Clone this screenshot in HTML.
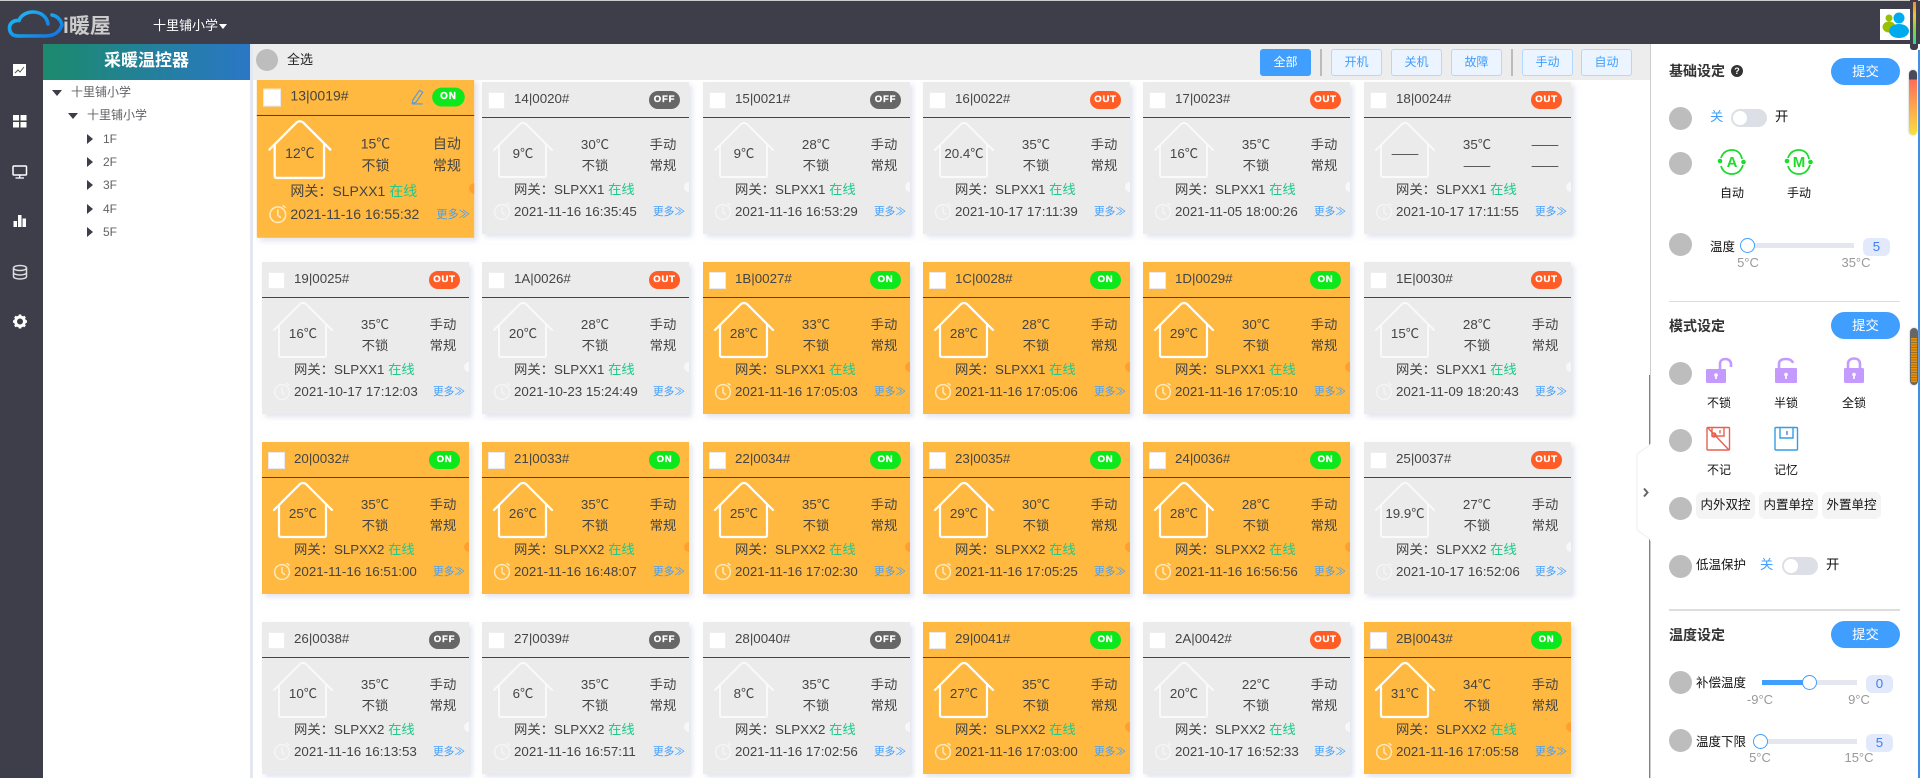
<!DOCTYPE html>
<html lang="zh"><head><meta charset="utf-8"><title>i暖屋</title>
<style>
*{box-sizing:border-box;margin:0;padding:0}
html,body{width:1920px;height:778px;overflow:hidden;background:#fff}
body{position:relative;font:13.33px/18px "Liberation Sans","Noto Sans CJK SC",sans-serif;color:#333;filter:blur(.3px)}
.a,.a>*{position:absolute}
#top{left:0;top:0;width:1920px;height:44px;background:#3e3d4a;border-top:1px solid #ccc}
#side{left:0;top:44px;width:43px;height:734px;background:#3e3d4a}
#tree{left:43px;top:44px;width:207px;height:734px;background:#fff}
#th{position:absolute;left:43px;top:44px;width:207px;height:36px;background:linear-gradient(90deg,#1c8a6c,#2a77c6);color:#fff;font-weight:bold;font-size:17px;line-height:34px;text-align:center}
.tt{position:absolute;color:#606266;white-space:nowrap;font-size:12px}
#strip{position:absolute;left:250px;top:44px;width:3px;height:734px;background:#e4e7f0}
#bar{position:absolute;left:253px;top:44px;width:1397px;height:36px;background:#ededed;z-index:2}
.bt{position:absolute;top:49px;height:27px;width:51px;border:1px solid #b3d8ff;background:#ecf5ff;color:#409eff;font-size:12px;line-height:25px;text-align:center;border-radius:3px;z-index:3}
.sp{position:absolute;top:49px;height:27px;width:2px;background:#bbb;z-index:3}
.c{position:absolute;width:207px;height:152px;background:#ebebeb;box-shadow:3px 3px 5px rgba(200,205,225,.55);color:#444;--hs:#fafafa;--sw:1.9;--ck:#f5f5f5}
.c.o{background:#ffb940;--hs:#fff;--sw:2.2;--ck:#ffe9bd}
.c>*{position:absolute;white-space:nowrap}
.c svg{left:0;top:0;width:207px;height:152px}
.k{left:6px;top:10px;width:17px;height:17px;background:#fff;border:1px solid #eee}
.o .k{border-color:#e8e8ee}
.t{left:32px;top:8px}
.l{left:0;top:35px;width:207px;height:1px;background:#3a4a4a}
.b{left:167px;top:9px;width:31px;height:18px;border-radius:9px;color:#fff;font:bold 9.5px/18px "Liberation Sans",sans-serif;letter-spacing:.8px;text-align:center;-webkit-text-stroke:.3px #fff}
.on{background:#0de81c}.off{background:#666}.out{background:#ff5c26}
.m{left:1px;width:80px;text-align:center;top:63px}
.s{left:83px;width:60px;text-align:center;top:54px}.s2{top:75px}
.w{left:161px;width:40px;text-align:center;top:54px}.w2{top:75px}
.g{left:32px;top:99px}.g i{font-style:normal;color:#1fc98a}
.d{left:32px;top:121px}
.mo{left:171px;top:121px;font-size:10.67px;color:#409eff}
.dt{left:202px;top:100px;width:5px;height:10px;border-radius:5px 0 0 5px;background:#f7f7f7}
.o .dt{background:#ff9f2e}
.hs{fill:none;stroke:var(--hs);stroke-width:var(--sw);stroke-linecap:round;stroke-linejoin:round}
.ck{fill:none;stroke:var(--ck);stroke-width:1.500;stroke-linecap:round}
#panel{position:absolute;left:1650px;top:44px;width:270px;height:734px;background:#fff;border-left:1px solid #ccc}
.p{position:absolute;white-space:nowrap;color:#111}
.f{font-size:12.5px}
.h3{font-size:14px;font-weight:bold;color:#333}
.cir{position:absolute;left:1669px;width:23px;height:23px;border-radius:50%;background:#bdbdbd}
.sub{position:absolute;left:1831px;width:69px;height:27px;border-radius:14px;background:#409eff;color:#fff;text-align:center;line-height:27px}
.tg{position:absolute;width:36px;height:18px;border-radius:9px;background:#dcdfe6}
.tg b{position:absolute;left:2px;top:2px;width:14px;height:14px;border-radius:50%;background:#fff}
.ctr{position:absolute;text-align:center;white-space:nowrap;color:#111;width:60px;font-size:12px}
.tr{position:absolute;height:5px;background:#e4e7ed}
.kn{position:absolute;width:15px;height:15px;border-radius:50%;background:#fff;border:1.5px solid #409eff}
.vb{position:absolute;width:27px;height:18px;border-radius:6px;background:#e1e9fb;color:#3f7ff0;text-align:center;line-height:18px}
.lb{position:absolute;width:50px;text-align:center;color:#999;font-size:13px;white-space:nowrap}
.mb{position:absolute;top:492px;width:59px;height:27px;border-radius:6px;background:#f4f4f5;color:#111;text-align:center;line-height:26px;white-space:nowrap;font-size:12.5px}
svg.ab{position:absolute;overflow:visible}
</style></head><body>
<svg width="0" height="0" style="position:absolute"><defs>
<symbol id="hs" viewBox="0 0 207 152"><path class="hs" d="M12 68L38 42Q41 40 44 42L70 68M17 63V93Q17 95 19 95H62Q64 95 64 93V63"/><circle class="ck" cx="20" cy="130" r="7.4"/><path class="ck" d="M20 125.500V130.500L22.500 132.500M25 121.500L27 123"/></symbol>
<linearGradient id="cl" x1="0" y1="0" x2="1" y2="1"><stop offset="0" stop-color="#1fc3f5"/><stop offset="1" stop-color="#1170e0"/></linearGradient>
</defs></svg>

<div id="top" class="a"></div>
<svg class="ab" style="left:0;top:0" width="70" height="44" viewBox="0 0 70 44"><path d="M18 36C11 36 9.500 31 9.500 28C9.500 23 14 20 19 20.500C21 15 27 12 33 12C41 12 47 17 48 24" fill="none" stroke="url(#cl)" stroke-width="3.600" stroke-linecap="round"/><path d="M18 36H46C55 36 60 31 62 25C61 20 57 16 52 15" fill="none" stroke="url(#cl)" stroke-width="3.600" stroke-linecap="round"/></svg>
<div class="p" style="left:63px;top:12px;font-size:21px;line-height:30px;color:#ccc;font-weight:bold">i暖屋</div>
<div class="p" style="left:153px;top:17px;color:#fff;font-size:13px">十里铺小学</div>
<div style="position:absolute;left:219px;top:24px;border:4.500px solid transparent;border-top:5px solid #fff;border-bottom:0"></div>
<div style="position:absolute;left:1880px;top:9px;width:30px;height:31px;background:#fff"></div>
<svg class="ab" style="left:1880px;top:9px" width="30" height="31" viewBox="0 0 30 31"><circle cx="9" cy="9" r="3.500" fill="#99c000"/><ellipse cx="9" cy="18" rx="6.500" ry="5.500" fill="#99c000"/><circle cx="19" cy="9" r="5.500" fill="#00aaee"/><ellipse cx="19" cy="22" rx="10" ry="7" fill="#00aaee"/></svg>
<div style="position:absolute;left:1910px;top:0;width:8px;height:50px;background:#3e3d4a;border-radius:0 0 3px 3px;z-index:5"></div>
<div style="position:absolute;left:1913px;top:2px;width:3px;height:42px;z-index:6;background:linear-gradient(#f28a3a,#e8c43a,#7ed04a,#2fd8a0)"></div>

<div id="side" class="a"></div>
<svg class="ab" style="left:0;top:0" width="43" height="340" viewBox="0 0 43 340">
<rect x="13" y="64" width="13" height="12" fill="#fff"/><path d="M15 73L18 70L20 72L24 67" fill="none" stroke="#555" stroke-width="1"/>
<path d="M13 115h6v5.500h-6zM20.500 115h6v5.500h-6zM13 122h6v5.500h-6zM20.500 122h6v5.500h-6z" fill="#fff"/>
<rect x="13" y="166" width="13.500" height="9" rx="1" fill="none" stroke="#fff" stroke-width="1.500"/><path d="M19.700 175.500v2.500M15.500 178h8.500" stroke="#fff" stroke-width="1.300" fill="none"/>
<path d="M13.500 221h3.500v6h-3.500zM18 215h3.500v12H18zM22.500 218.500H26V227h-3.500z" fill="#fff"/>
<g fill="none" stroke="#ddd" stroke-width="1.500"><ellipse cx="20" cy="268" rx="6.500" ry="2.500"/><path d="M13.500 268v8.500c0 1.500 3 2.500 6.500 2.500s6.500-1 6.500-2.500V268M13.500 272.500c0 1.500 3 2.500 6.500 2.500s6.500-1 6.500-2.500"/></g>
<circle cx="20" cy="321.500" r="4.500" fill="none" stroke="#fff" stroke-width="3"/><g stroke="#fff" stroke-width="2.600"><path d="M20 314.500v2.500M20 326v2.500M13 321.500h2.500M24.500 321.500H27M15 316.500l2 2M23 324.500l2 2M25 316.500l-2 2M17 324.500l-2 2"/></g>
</svg>

<div id="tree" class="a"></div>
<div id="th">采暖温控器</div>
<div style="position:absolute;left:52px;top:90px;border:5px solid transparent;border-top:6px solid #3e3d4a;border-bottom:0"></div><div class="tt" style="left:71px;top:83px">十里铺小学</div>
<div style="position:absolute;left:68px;top:113px;border:5px solid transparent;border-top:6px solid #3e3d4a;border-bottom:0"></div><div class="tt" style="left:87px;top:106px">十里铺小学</div>
<div style="position:absolute;left:87px;top:134px;border:5px solid transparent;border-left:6px solid #3e3d4a;border-right:0"></div><div class="tt" style="left:103px;top:130px">1F</div>
<div style="position:absolute;left:87px;top:157px;border:5px solid transparent;border-left:6px solid #3e3d4a;border-right:0"></div><div class="tt" style="left:103px;top:153px">2F</div>
<div style="position:absolute;left:87px;top:180px;border:5px solid transparent;border-left:6px solid #3e3d4a;border-right:0"></div><div class="tt" style="left:103px;top:176px">3F</div>
<div style="position:absolute;left:87px;top:204px;border:5px solid transparent;border-left:6px solid #3e3d4a;border-right:0"></div><div class="tt" style="left:103px;top:200px">4F</div>
<div style="position:absolute;left:87px;top:227px;border:5px solid transparent;border-left:6px solid #3e3d4a;border-right:0"></div><div class="tt" style="left:103px;top:223px">5F</div>
<div id="strip"></div>

<div id="bar"></div>
<div style="position:absolute;left:256px;top:49px;width:22px;height:22px;border-radius:50%;background:#bdbdbd;z-index:3"></div>
<div class="p" style="left:287px;top:51px;z-index:3;color:#222;font-size:13px">全选</div>
<div class="bt" style="left:1260px;background:#409eff;border-color:#409eff;color:#fff">全部</div>
<div class="sp" style="left:1320px"></div>
<div class="bt" style="left:1331px">开机</div>
<div class="bt" style="left:1391px">关机</div>
<div class="bt" style="left:1451px">故障</div>
<div class="sp" style="left:1511px"></div>
<div class="bt" style="left:1522px">手动</div>
<div class="bt" style="left:1581px">自动</div>

<!-- row 1 -->
<div class="c o" style="left:262px;top:82px;transform:scale(1.05);z-index:1"><svg><use href="#hs"/></svg><div class="k"></div><div class="t">13|0019#</div><svg viewBox="0 0 207 152"><path d="M148.500 21L155 11.500L158 13.500L151.500 23L148 24ZM148 24.500H158" fill="none" stroke="#5b9bd5" stroke-width="1.100"/></svg><div class="b on">ON</div><div class="l"></div><div class="m">12℃</div><div class="s">15℃</div><div class="s s2">不锁</div><div class="w">自动</div><div class="w w2">常规</div><div class="g">网关：SLPXX1 <i>在线</i></div><div class="dt"></div><div class="d">2021-11-16 16:55:32</div><div class="mo">更多≫</div></div>
<div class="c" style="left:482px;top:82px"><svg><use href="#hs"/></svg><div class="k"></div><div class="t">14|0020#</div><div class="b off">OFF</div><div class="l"></div><div class="m">9℃</div><div class="s">30℃</div><div class="s s2">不锁</div><div class="w">手动</div><div class="w w2">常规</div><div class="g">网关：SLPXX1 <i>在线</i></div><div class="dt"></div><div class="d">2021-11-16 16:35:45</div><div class="mo">更多≫</div></div>
<div class="c" style="left:703px;top:82px"><svg><use href="#hs"/></svg><div class="k"></div><div class="t">15|0021#</div><div class="b off">OFF</div><div class="l"></div><div class="m">9℃</div><div class="s">28℃</div><div class="s s2">不锁</div><div class="w">手动</div><div class="w w2">常规</div><div class="g">网关：SLPXX1 <i>在线</i></div><div class="dt"></div><div class="d">2021-11-16 16:53:29</div><div class="mo">更多≫</div></div>
<div class="c" style="left:923px;top:82px"><svg><use href="#hs"/></svg><div class="k"></div><div class="t">16|0022#</div><div class="b out">OUT</div><div class="l"></div><div class="m">20.4℃</div><div class="s">35℃</div><div class="s s2">不锁</div><div class="w">手动</div><div class="w w2">常规</div><div class="g">网关：SLPXX1 <i>在线</i></div><div class="dt"></div><div class="d">2021-10-17 17:11:39</div><div class="mo">更多≫</div></div>
<div class="c" style="left:1143px;top:82px"><svg><use href="#hs"/></svg><div class="k"></div><div class="t">17|0023#</div><div class="b out">OUT</div><div class="l"></div><div class="m">16℃</div><div class="s">35℃</div><div class="s s2">不锁</div><div class="w">手动</div><div class="w w2">常规</div><div class="g">网关：SLPXX1 <i>在线</i></div><div class="dt"></div><div class="d">2021-11-05 18:00:26</div><div class="mo">更多≫</div></div>
<div class="c" style="left:1364px;top:82px"><svg><use href="#hs"/></svg><div class="k"></div><div class="t">18|0024#</div><div class="b out">OUT</div><div class="l"></div><div class="m">——</div><div class="s">35℃</div><div class="s s2">——</div><div class="w">——</div><div class="w w2">——</div><div class="g">网关：SLPXX1 <i>在线</i></div><div class="dt"></div><div class="d">2021-10-17 17:11:55</div><div class="mo">更多≫</div></div>
<!-- row 2 -->
<div class="c" style="left:262px;top:262px"><svg><use href="#hs"/></svg><div class="k"></div><div class="t">19|0025#</div><div class="b out">OUT</div><div class="l"></div><div class="m">16℃</div><div class="s">35℃</div><div class="s s2">不锁</div><div class="w">手动</div><div class="w w2">常规</div><div class="g">网关：SLPXX1 <i>在线</i></div><div class="dt"></div><div class="d">2021-10-17 17:12:03</div><div class="mo">更多≫</div></div>
<div class="c" style="left:482px;top:262px"><svg><use href="#hs"/></svg><div class="k"></div><div class="t">1A|0026#</div><div class="b out">OUT</div><div class="l"></div><div class="m">20℃</div><div class="s">28℃</div><div class="s s2">不锁</div><div class="w">手动</div><div class="w w2">常规</div><div class="g">网关：SLPXX1 <i>在线</i></div><div class="dt"></div><div class="d">2021-10-23 15:24:49</div><div class="mo">更多≫</div></div>
<div class="c o" style="left:703px;top:262px"><svg><use href="#hs"/></svg><div class="k"></div><div class="t">1B|0027#</div><div class="b on">ON</div><div class="l"></div><div class="m">28℃</div><div class="s">33℃</div><div class="s s2">不锁</div><div class="w">手动</div><div class="w w2">常规</div><div class="g">网关：SLPXX1 <i>在线</i></div><div class="dt"></div><div class="d">2021-11-16 17:05:03</div><div class="mo">更多≫</div></div>
<div class="c o" style="left:923px;top:262px"><svg><use href="#hs"/></svg><div class="k"></div><div class="t">1C|0028#</div><div class="b on">ON</div><div class="l"></div><div class="m">28℃</div><div class="s">28℃</div><div class="s s2">不锁</div><div class="w">手动</div><div class="w w2">常规</div><div class="g">网关：SLPXX1 <i>在线</i></div><div class="dt"></div><div class="d">2021-11-16 17:05:06</div><div class="mo">更多≫</div></div>
<div class="c o" style="left:1143px;top:262px"><svg><use href="#hs"/></svg><div class="k"></div><div class="t">1D|0029#</div><div class="b on">ON</div><div class="l"></div><div class="m">29℃</div><div class="s">30℃</div><div class="s s2">不锁</div><div class="w">手动</div><div class="w w2">常规</div><div class="g">网关：SLPXX1 <i>在线</i></div><div class="dt"></div><div class="d">2021-11-16 17:05:10</div><div class="mo">更多≫</div></div>
<div class="c" style="left:1364px;top:262px"><svg><use href="#hs"/></svg><div class="k"></div><div class="t">1E|0030#</div><div class="b out">OUT</div><div class="l"></div><div class="m">15℃</div><div class="s">28℃</div><div class="s s2">不锁</div><div class="w">手动</div><div class="w w2">常规</div><div class="g">网关：SLPXX1 <i>在线</i></div><div class="dt"></div><div class="d">2021-11-09 18:20:43</div><div class="mo">更多≫</div></div>
<!-- row 3 -->
<div class="c o" style="left:262px;top:442px"><svg><use href="#hs"/></svg><div class="k"></div><div class="t">20|0032#</div><div class="b on">ON</div><div class="l"></div><div class="m">25℃</div><div class="s">35℃</div><div class="s s2">不锁</div><div class="w">手动</div><div class="w w2">常规</div><div class="g">网关：SLPXX2 <i>在线</i></div><div class="dt"></div><div class="d">2021-11-16 16:51:00</div><div class="mo">更多≫</div></div>
<div class="c o" style="left:482px;top:442px"><svg><use href="#hs"/></svg><div class="k"></div><div class="t">21|0033#</div><div class="b on">ON</div><div class="l"></div><div class="m">26℃</div><div class="s">35℃</div><div class="s s2">不锁</div><div class="w">手动</div><div class="w w2">常规</div><div class="g">网关：SLPXX2 <i>在线</i></div><div class="dt"></div><div class="d">2021-11-16 16:48:07</div><div class="mo">更多≫</div></div>
<div class="c o" style="left:703px;top:442px"><svg><use href="#hs"/></svg><div class="k"></div><div class="t">22|0034#</div><div class="b on">ON</div><div class="l"></div><div class="m">25℃</div><div class="s">35℃</div><div class="s s2">不锁</div><div class="w">手动</div><div class="w w2">常规</div><div class="g">网关：SLPXX2 <i>在线</i></div><div class="dt"></div><div class="d">2021-11-16 17:02:30</div><div class="mo">更多≫</div></div>
<div class="c o" style="left:923px;top:442px"><svg><use href="#hs"/></svg><div class="k"></div><div class="t">23|0035#</div><div class="b on">ON</div><div class="l"></div><div class="m">29℃</div><div class="s">30℃</div><div class="s s2">不锁</div><div class="w">手动</div><div class="w w2">常规</div><div class="g">网关：SLPXX2 <i>在线</i></div><div class="dt"></div><div class="d">2021-11-16 17:05:25</div><div class="mo">更多≫</div></div>
<div class="c o" style="left:1143px;top:442px"><svg><use href="#hs"/></svg><div class="k"></div><div class="t">24|0036#</div><div class="b on">ON</div><div class="l"></div><div class="m">28℃</div><div class="s">28℃</div><div class="s s2">不锁</div><div class="w">手动</div><div class="w w2">常规</div><div class="g">网关：SLPXX2 <i>在线</i></div><div class="dt"></div><div class="d">2021-11-16 16:56:56</div><div class="mo">更多≫</div></div>
<div class="c" style="left:1364px;top:442px"><svg><use href="#hs"/></svg><div class="k"></div><div class="t">25|0037#</div><div class="b out">OUT</div><div class="l"></div><div class="m">19.9℃</div><div class="s">27℃</div><div class="s s2">不锁</div><div class="w">手动</div><div class="w w2">常规</div><div class="g">网关：SLPXX2 <i>在线</i></div><div class="dt"></div><div class="d">2021-10-17 16:52:06</div><div class="mo">更多≫</div></div>
<!-- row 4 -->
<div class="c" style="left:262px;top:622px"><svg><use href="#hs"/></svg><div class="k"></div><div class="t">26|0038#</div><div class="b off">OFF</div><div class="l"></div><div class="m">10℃</div><div class="s">35℃</div><div class="s s2">不锁</div><div class="w">手动</div><div class="w w2">常规</div><div class="g">网关：SLPXX2 <i>在线</i></div><div class="dt"></div><div class="d">2021-11-16 16:13:53</div><div class="mo">更多≫</div></div>
<div class="c" style="left:482px;top:622px"><svg><use href="#hs"/></svg><div class="k"></div><div class="t">27|0039#</div><div class="b off">OFF</div><div class="l"></div><div class="m">6℃</div><div class="s">35℃</div><div class="s s2">不锁</div><div class="w">手动</div><div class="w w2">常规</div><div class="g">网关：SLPXX2 <i>在线</i></div><div class="dt"></div><div class="d">2021-11-16 16:57:11</div><div class="mo">更多≫</div></div>
<div class="c" style="left:703px;top:622px"><svg><use href="#hs"/></svg><div class="k"></div><div class="t">28|0040#</div><div class="b off">OFF</div><div class="l"></div><div class="m">8℃</div><div class="s">35℃</div><div class="s s2">不锁</div><div class="w">手动</div><div class="w w2">常规</div><div class="g">网关：SLPXX2 <i>在线</i></div><div class="dt"></div><div class="d">2021-11-16 17:02:56</div><div class="mo">更多≫</div></div>
<div class="c o" style="left:923px;top:622px"><svg><use href="#hs"/></svg><div class="k"></div><div class="t">29|0041#</div><div class="b on">ON</div><div class="l"></div><div class="m">27℃</div><div class="s">35℃</div><div class="s s2">不锁</div><div class="w">手动</div><div class="w w2">常规</div><div class="g">网关：SLPXX2 <i>在线</i></div><div class="dt"></div><div class="d">2021-11-16 17:03:00</div><div class="mo">更多≫</div></div>
<div class="c" style="left:1143px;top:622px"><svg><use href="#hs"/></svg><div class="k"></div><div class="t">2A|0042#</div><div class="b out">OUT</div><div class="l"></div><div class="m">20℃</div><div class="s">22℃</div><div class="s s2">不锁</div><div class="w">手动</div><div class="w w2">常规</div><div class="g">网关：SLPXX2 <i>在线</i></div><div class="dt"></div><div class="d">2021-10-17 16:52:33</div><div class="mo">更多≫</div></div>
<div class="c o" style="left:1364px;top:622px"><svg><use href="#hs"/></svg><div class="k"></div><div class="t">2B|0043#</div><div class="b on">ON</div><div class="l"></div><div class="m">31℃</div><div class="s">34℃</div><div class="s s2">不锁</div><div class="w">手动</div><div class="w w2">常规</div><div class="g">网关：SLPXX2 <i>在线</i></div><div class="dt"></div><div class="d">2021-11-16 17:05:58</div><div class="mo">更多≫</div></div>

<!-- right panel -->
<div id="panel"></div>
<div style="position:absolute;left:1649px;top:375px;width:1px;height:403px;background:#4a8ad8"></div>
<div style="position:absolute;left:1918px;top:50px;width:2px;height:728px;background:#3f8fe8"></div>
<svg class="ab" style="left:1636px;top:444px" width="15" height="97" viewBox="0 0 15 97"><path d="M15 0L1 10V86L15 96Z" fill="#fff" stroke="#eee" stroke-width="1"/><path d="M15 0V97" stroke="#fff" stroke-width="2"/><path d="M8 44.500L11.500 48.500L8 52.500" fill="none" stroke="#666" stroke-width="2"/></svg>
<div style="position:absolute;left:1909px;top:70px;width:8px;height:65px;border-radius:4px;background:linear-gradient(#4a4a5a 0,#4a4a5a 9px,#ff6f5a 10px,#f5e040 100%);box-shadow:0 0 2px #bbb"></div>
<div style="position:absolute;left:1910px;top:328px;width:8px;height:57px;border-radius:4px;background:repeating-linear-gradient(#f09000 0,#f09000 1.500px,#9a7020 1.500px,#9a7020 2.500px);border:solid #666;border-width:10px 1px 2px;box-shadow:0 0 2px #bbb"></div>

<div class="p h3" style="left:1669px;top:62px">基础设定</div>
<div style="position:absolute;left:1731px;top:65px;width:12px;height:12px;border-radius:50%;background:#333;color:#fff;font:bold 9px/12px 'Liberation Sans';text-align:center">?</div>
<div class="sub" style="top:58px">提交</div>
<div class="cir" style="top:107px"></div>
<div class="p" style="left:1710px;top:108px;color:#409eff">关</div>
<div class="tg" style="left:1731px;top:109px"><b></b></div>
<div class="p" style="left:1775px;top:108px">开</div>
<div class="cir" style="top:152px"></div>
<svg class="ab" style="left:1715px;top:146px" width="100" height="32" viewBox="0 0 100 32" font-family="Liberation Sans" font-weight="bold" font-size="15" fill="#1ddb2a" text-anchor="middle">
<g fill="none" stroke="#1ddb2a" stroke-width="1.800"><path d="M6 12C8 6 12 4 17 4C22 4 26 7 27 13M28 19C26 25 22 28 17 28C12 28 8 26 6 20"/><path d="M73 12C75 6 79 4 84 4C89 4 93 7 94 13M95 19C93 25 89 28 84 28C79 28 75 26 73 20"/></g>
<circle cx="5" cy="15" r="2.300"/><circle cx="28.500" cy="16" r="2.300"/><circle cx="72" cy="15" r="2.300"/><circle cx="95.500" cy="16" r="2.300"/>
<text x="17" y="21">A</text><text x="84" y="21">M</text></svg>
<div class="ctr" style="left:1702px;top:184px">自动</div>
<div class="ctr" style="left:1769px;top:184px">手动</div>
<div class="cir" style="top:233px"></div>
<div class="p f" style="left:1710px;top:238px">温度</div>
<div class="tr" style="left:1748px;top:243px;width:106px"></div>
<div class="kn" style="left:1740px;top:238px"></div>
<div class="vb" style="left:1863px;top:238px">5</div>
<div class="lb" style="left:1723px;top:254px">5°C</div>
<div class="lb" style="left:1831px;top:254px">35°C</div>
<div style="position:absolute;left:1669px;top:301px;width:231px;height:1px;background:#ddd"></div>

<div class="p h3" style="left:1669px;top:317px">模式设定</div>
<div class="sub" style="top:312px">提交</div>
<div class="cir" style="top:362px"></div>
<svg class="ab" style="left:1700px;top:350px" width="170" height="110" viewBox="0 0 170 110">
<g fill="#c59aff"><rect x="6" y="19" width="20" height="14" rx="1"/><rect x="75" y="18" width="22" height="15" rx="1"/><rect x="144" y="18" width="20" height="15" rx="1.500"/></g>
<g fill="none" stroke="#c59aff" stroke-width="2.600"><path d="M20 19V14C20 10 23 9 25.500 9C28.500 9 31 11 31 14V17"/><path d="M79 18V14C79 10 82 9 86 9C89 9 92 10 93 13"/><path d="M148 18V14C148 10 151 8.500 154 8.500C157 8.500 160 10 160 14V18"/></g>
<g fill="#fff"><circle cx="16" cy="25" r="1.800"/><rect x="15.200" y="25" width="1.600" height="4"/><circle cx="86" cy="24.500" r="1.800"/><rect x="85.200" y="24.500" width="1.600" height="4.500"/><circle cx="154" cy="24.500" r="1.800"/><rect x="153.200" y="24.500" width="1.600" height="4.500"/></g>
<g fill="none" stroke="#e8604f" stroke-width="1.400"><rect x="7" y="77.500" width="22.500" height="22.500" rx="1"/><path d="M12 78V86H24V78M8 78L29 100"/><circle cx="14" cy="85" r="2"/></g>
<path d="M20 80v3.500" stroke="#e8604f" stroke-width="1.300"/>
<g fill="none" stroke="#2f9fe8" stroke-width="1.400"><rect x="75" y="77.500" width="22.500" height="22.500" rx="1"/><path d="M80 78V88H93V78"/></g>
<path d="M87 81v4" stroke="#6a80d8" stroke-width="1.500"/>
</svg>
<div class="ctr" style="left:1689px;top:394px">不锁</div>
<div class="ctr" style="left:1756px;top:394px">半锁</div>
<div class="ctr" style="left:1824px;top:394px">全锁</div>
<div class="cir" style="top:429px"></div>
<div class="ctr" style="left:1689px;top:461px">不记</div>
<div class="ctr" style="left:1756px;top:461px">记忆</div>
<div class="cir" style="top:497px"></div>
<div class="mb" style="left:1696px">内外双控</div>
<div class="mb" style="left:1759px">内置单控</div>
<div class="mb" style="left:1822px">外置单控</div>
<div class="cir" style="top:555px"></div>
<div class="p f" style="left:1696px;top:556px">低温保护</div>
<div class="p" style="left:1760px;top:556px;color:#409eff">关</div>
<div class="tg" style="left:1782px;top:557px"><b></b></div>
<div class="p" style="left:1826px;top:556px">开</div>
<div style="position:absolute;left:1669px;top:609px;width:231px;height:2px;background:#ddd"></div>

<div class="p h3" style="left:1669px;top:626px">温度设定</div>
<div class="sub" style="top:621px">提交</div>
<div class="cir" style="top:671px"></div>
<div class="p f" style="left:1696px;top:674px">补偿温度</div>
<div class="tr" style="left:1762px;top:680px;width:95px"></div>
<div class="tr" style="left:1762px;top:680px;width:47px;background:#409eff"></div>
<div class="kn" style="left:1802px;top:675px"></div>
<div class="vb" style="left:1866px;top:675px">0</div>
<div class="lb" style="left:1735px;top:691px">-9°C</div>
<div class="lb" style="left:1834px;top:691px">9°C</div>
<div class="cir" style="top:729px"></div>
<div class="p f" style="left:1696px;top:733px">温度下限</div>
<div class="tr" style="left:1760px;top:739px;width:97px"></div>
<div class="kn" style="left:1753px;top:734px"></div>
<div class="vb" style="left:1866px;top:734px">5</div>
<div class="lb" style="left:1735px;top:749px">5°C</div>
<div class="lb" style="left:1834px;top:749px">15°C</div>
</body></html>
